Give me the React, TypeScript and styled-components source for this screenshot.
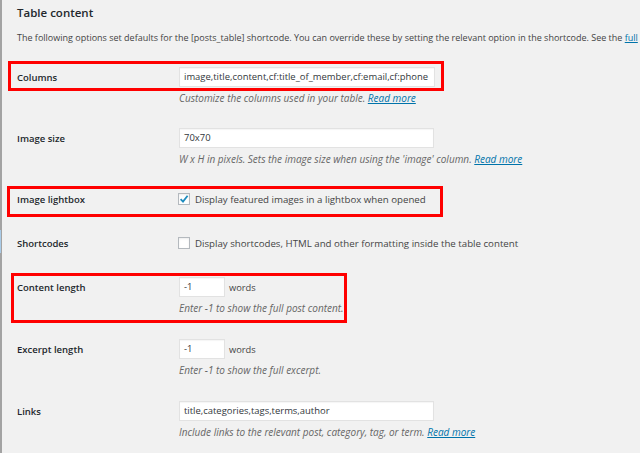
import React from "react";
import styled, { createGlobalStyle } from "styled-components";

const GlobalStyle = createGlobalStyle`
  html, body {
    margin: 0;
    padding: 0;
    background: #f1f1f1;
  }
  body {
    font-family: "Open Sans", "Noto Sans", sans-serif;
    color: #444;
    overflow: hidden;
  }
`;

type TRow = {
  label: string;
  kind: "text" | "number" | "checkbox";
  value?: string;
  checked?: boolean;
  inputWidth?: number;
  suffix?: string;
  desc?: string;
  link?: boolean;
  pad: string;
  // annotation box, relative to the row
  callout?: { top: number; bottom: number; left: number; width: number };
};

const rows: TRow[] = [
  {
    label: "Columns",
    kind: "text",
    value: "image,title,content,cf:title_of_member,cf:email,cf:phone",
    inputWidth: 256,
    desc: "Customize the columns used in your table.",
    link: true,
    pad: "12px 0 12px",
    callout: { top: 6, bottom: 26, left: 8, width: 436 },
  },
  {
    label: "Image size",
    kind: "text",
    value: "70x70",
    inputWidth: 255,
    desc: "W x H in pixels. Sets the image size when using the 'image' column.",
    link: true,
    pad: "11px 0 11px",
  },
  {
    label: "Image lightbox",
    kind: "checkbox",
    checked: true,
    value: "Display featured images in a lightbox when opened",
    pad: "11px 0 11px",
    callout: { top: 9, bottom: 4, left: 7, width: 436 },
  },
  {
    label: "Shortcodes",
    kind: "checkbox",
    value: "Display shortcodes, HTML and other formatting inside the table content",
    pad: "11px 0 11px",
  },
  {
    label: "Content length",
    kind: "number",
    value: "-1",
    suffix: "words",
    desc: "Enter -1 to show the full post content.",
    pad: "12px 0 12px",
    callout: { top: 8, bottom: 4, left: 11, width: 336 },
  },
  {
    label: "Excerpt length",
    kind: "number",
    value: "-1",
    suffix: "words",
    desc: "Enter -1 to show the full excerpt.",
    pad: "12px 0 12px",
  },
  {
    label: "Links",
    kind: "text",
    value: "title,categories,tags,terms,author",
    inputWidth: 255,
    desc: "Include links to the relevant post, category, tag, or term.",
    link: true,
    pad: "12px 0 12px",
  },
];

export default function App() {
  return (
    <>
      <GlobalStyle />
      <Screen>
        <Edge>
          <EdgeMark />
        </Edge>
        <Content>
          <Heading>Table content</Heading>
          <Intro>
            The following options set defaults for the [posts_table] shortcode. You can override these by setting
            the relevant option in the shortcode. See the <Link>full</Link>
          </Intro>
          <Rows>
            {rows.map((row) => (
              <Row key={row.label} $pad={row.pad}>
                <Label $check={row.kind === "checkbox"}>{row.label}</Label>
                <Field>
                  {row.kind === "checkbox" ? (
                    <CheckLine>
                      <CheckBox>
                        {row.checked && (
                          <svg width="10" height="10" viewBox="0 0 10 10">
                            <path d="M1.6 5.2 L4 7.6 L8.6 1.8" fill="none" stroke="#1e8cbe" strokeWidth="1.8" />
                          </svg>
                        )}
                      </CheckBox>
                      {row.value}
                    </CheckLine>
                  ) : (
                    <InputLine>
                      <TextBox $width={row.kind === "number" ? 46 : row.inputWidth || 255}>{row.value}</TextBox>
                      {row.suffix && <Suffix>{row.suffix}</Suffix>}
                    </InputLine>
                  )}
                  {row.desc && (
                    <Desc>
                      {row.desc}
                      {row.link && (
                        <>
                          {" "}
                          <Link>Read more</Link>
                        </>
                      )}
                    </Desc>
                  )}
                </Field>
                {row.callout && (
                  <Callout
                    style={{
                      top: row.callout.top,
                      bottom: row.callout.bottom,
                      left: row.callout.left,
                      width: row.callout.width,
                    }}
                  />
                )}
              </Row>
            ))}
          </Rows>
        </Content>
      </Screen>
    </>
  );
}

const Screen = styled.div`
  display: flex;
  width: 640px;
  height: 453px;
  overflow: hidden;
`;

const Edge = styled.div`
  width: 2px;
  flex: 0 0 2px;
  background: #a3a3a3;
`;

const EdgeMark = styled.div`
  margin-top: 230px;
  height: 23px;
  width: 1px;
  background: #a9cbe8;
`;

const Content = styled.div`
  flex: 1;
  position: relative;
  margin-left: -2px;
  padding-left: 17px;
`;

const Heading = styled.h2`
  margin: 5px 0 0;
  font-size: 11.5px;
  line-height: 16px;
  font-weight: 600;
  color: #23282d;
`;

const Intro = styled.p`
  margin: 11px 0 0;
  font-size: 9px;
  line-height: 12px;
  white-space: nowrap;
  color: #444;
`;

const Rows = styled.div`
  margin-top: 11px;
`;

const Row = styled.div<{ $pad: string }>`
  position: relative;
  display: flex;
  align-items: flex-start;
  padding: ${(p) => p.$pad};
`;

const Label = styled.div<{ $check: boolean }>`
  width: 162px;
  flex: 0 0 162px;
  padding-top: 1px;
  font-size: 9.5px;
  font-weight: 600;
  color: #23282d;
  line-height: ${(p) => (p.$check ? "21px" : "19px")};
`;

const Field = styled.div`
  display: flex;
  flex-direction: column;
`;

const InputLine = styled.div`
  display: flex;
  align-items: center;
  height: 20px;
`;

const TextBox = styled.div<{ $width: number }>`
  box-sizing: border-box;
  width: ${(p) => p.$width}px;
  height: 20px;
  padding: 0 4px;
  background: #fff;
  border: 1px solid #e2e2e2;
  box-shadow: inset 0 1px 1px rgba(0, 0, 0, 0.04);
  font-size: 9.45px;
  line-height: 18px;
  color: #32373c;
  white-space: nowrap;
  overflow: hidden;
`;

const Suffix = styled.span`
  margin-left: 4px;
  font-size: 9.3px;
  color: #444;
`;

const Desc = styled.div`
  margin-top: 4px;
  font-size: 10px;
  line-height: 14px;
  font-style: italic;
  color: #666;
  white-space: nowrap;
`;

const Link = styled.span`
  color: #0073aa;
  text-decoration: underline;
`;

const CheckLine = styled.div`
  display: flex;
  align-items: center;
  height: 22px;
  font-size: 9.7px;
  color: #444;
  white-space: nowrap;
`;

const CheckBox = styled.span`
  box-sizing: border-box;
  display: flex;
  align-items: center;
  justify-content: center;
  width: 12px;
  height: 12px;
  margin: 0 5px 0 -1px;
  background: #fff;
  border: 1px solid #b4b9be;
  box-shadow: inset 0 1px 2px rgba(0, 0, 0, 0.08);
`;

const Callout = styled.div`
  position: absolute;
  box-sizing: border-box;
  border: 3px solid #f00;
  margin-left: -17px;
  pointer-events: none;
`;
